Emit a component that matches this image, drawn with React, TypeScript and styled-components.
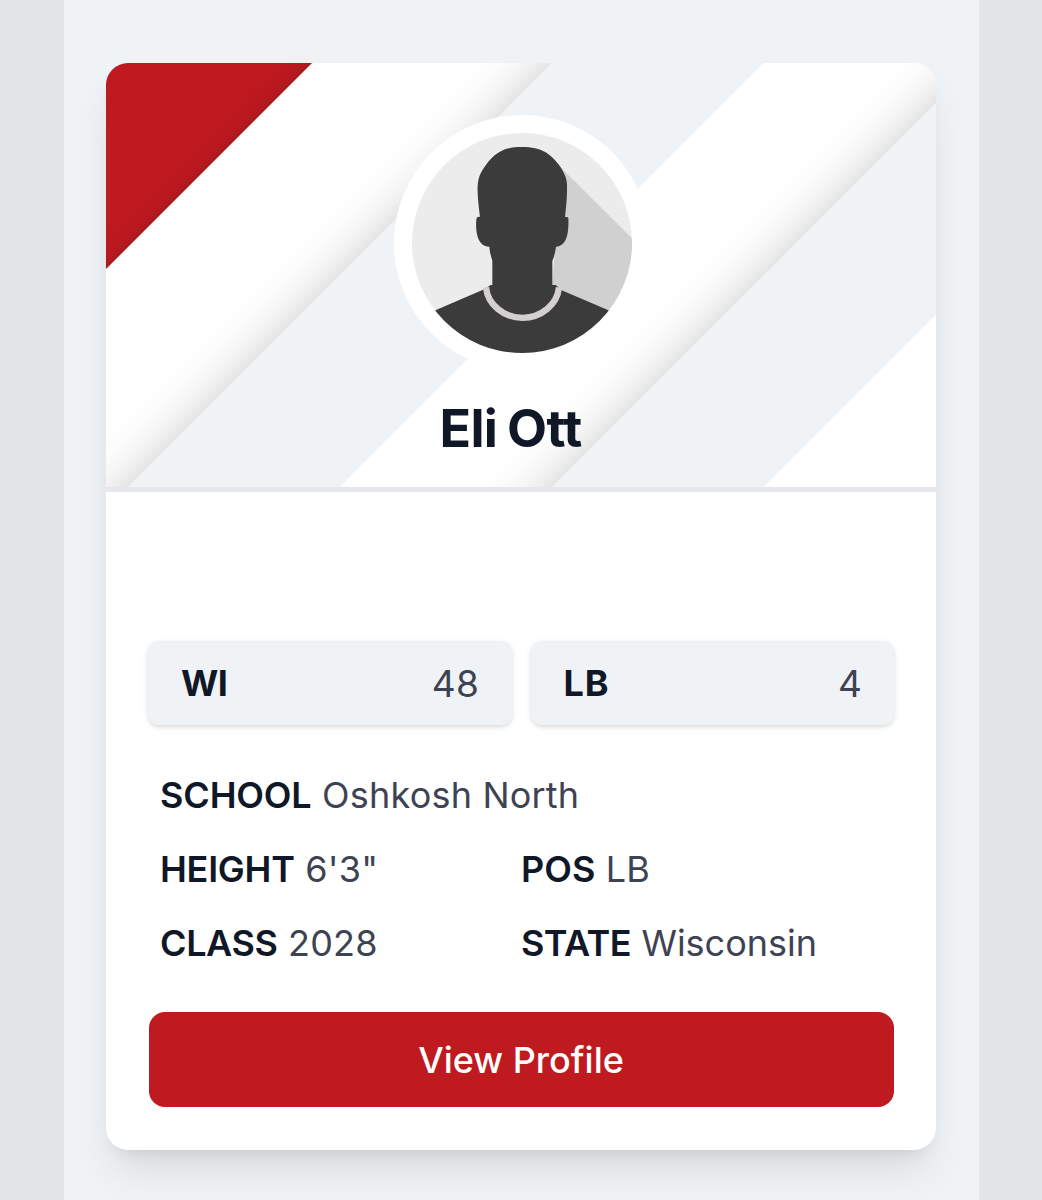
import React from "react";
import styled, { createGlobalStyle } from "styled-components";

const GlobalStyle = createGlobalStyle`
  *, *::before, *::after { box-sizing: border-box; }
  body {
    margin: 0;
    background: #e2e6e9;
    font-family: Inter, "Liberation Sans", sans-serif;
    color: #101828;
  }
`;

const Page = styled.main`
  width: 914.5px;
  height: 1200px;
  margin-left: 64px;
  padding: 63px 42px 0;
  background: #eff3f6;
  overflow: hidden;
`;

const Card = styled.article`
  width: 830px;
  height: 1086.5px;
  border-radius: 22px;
  background: #fff;
  overflow: hidden;
  box-shadow: 0 26px 40px -8px rgba(0, 0, 0, 0.1), 0 11px 16px -10px rgba(0, 0, 0, 0.1);
`;

const Hero = styled.header`
  height: 429px;
  padding-top: 52px;
  display: flex;
  flex-direction: column;
  align-items: center;
  border-bottom: 5px solid #e6e7ea;
  background: linear-gradient(
      135deg,
      #bf1a20 0 112px,
      #bc191f 130px,
      #b5191f 142px,
      #a51b21 145.2px,
      #fff 146.2px 262px,
      #fcfcfc 278px,
      #f6f6f6 294px,
      #eeeeee 305px,
      #e5e5e6 314.8px,
      #f1f2f6 315.8px,
      #eff3f6 330px 464.8px,
      #fff 465.8px 562px,
      #fcfcfc 578px,
      #f6f6f6 594px,
      #eeeeee 605px,
      #e5e5e6 614.8px,
      #f1f2f6 615.8px,
      #eff3f6 630px 764.3px,
      #fff 765.3px
    )
    padding-box;
`;

const AvatarRing = styled.div`
  width: 256px;
  height: 256px;
  margin-left: 2px;
  padding: 18px;
  border-radius: 50%;
  background: #fff;

  svg {
    display: block;
    width: 220px;
    height: 220px;
  }
`;

const PlayerName = styled.h1`
  margin: 26px 21px 0 0;
  font-size: 52px;
  line-height: 64px;
  font-weight: 700;
  letter-spacing: -0.6px;
  word-spacing: -2px;
`;

const Body = styled.section`
  padding: 149px 42px 0;
`;

const Ranks = styled.div`
  display: grid;
  grid-template-columns: 1fr 1fr;
  gap: 19px;
`;

const Rank = styled.div`
  height: 84px;
  padding: 0 32px 0 33px;
  display: flex;
  align-items: center;
  justify-content: space-between;
  border-radius: 11px;
  background: #f0f3f6;
  box-shadow: 0 2px 6px rgba(0, 0, 0, 0.1), 0 2px 4px -1px rgba(0, 0, 0, 0.08);
  font-size: 36px;
`;

const Label = styled.span<{ $spacing?: number; $weight?: number }>`
  font-weight: ${(p) => p.$weight ?? 600};
  letter-spacing: ${(p) => p.$spacing ?? 0}px;
  color: #101828;
`;

const Value = styled.span<{ $spacing?: number }>`
  font-weight: 400;
  letter-spacing: ${(p) => p.$spacing ?? 0}px;
  color: #3d4352;
`;

const RankValue = styled(Value)`
  font-size: 37px;
`;

const Facts = styled.dl`
  margin: 33px 0 0;
  padding-left: 12px;
  display: grid;
  grid-template-columns: 361px 1fr;
  grid-auto-rows: 74px;
  font-size: 36px;
`;

const Fact = styled.div<{ $wide?: boolean }>`
  grid-column: ${(p) => (p.$wide ? "1 / -1" : "auto")};
  display: flex;
  align-items: center;
  gap: 10.5px;
  white-space: nowrap;
`;

const ProfileButton = styled.button`
  display: block;
  width: 745px;
  height: 95px;
  margin: 32px auto 0;
  border: 0;
  border-radius: 16px;
  background: #bf1a20;
  color: #fff;
  font: 500 36px Inter, "Liberation Sans", sans-serif;
  letter-spacing: 0;
`;

function Silhouette() {
  return (
    <svg viewBox="0 0 660 660" role="img" aria-label="Player silhouette">
      <defs>
        <clipPath id="avatar-clip">
          <circle cx="330" cy="330" r="330" />
        </clipPath>
      </defs>
      <g clipPath="url(#avatar-clip)">
        <rect width="660" height="660" fill="#ececec" />
        <path d="M448 105L670 326V560L590 532L420 460Z" fill="#d0d0d0" />
        <path
          d="M60 536L220 467L236 456H241V383C236 366 233 355 232 341C212 341 199 326 195 303C191 284 192 262 194 254C197 252 200 251 204 252C201 228 198 205 197 180C196 150 199 130 212 110C244 62 270 42 330 42C390 42 417 62 447 104C459 124 465 138 465 159C466 193 462 224 459 252C463 251 468 252 469 255C470 275 469 289 466 305C461 327 449 340 432 341C430 357 427 369 421 384V456H431L449 472L595 534L670 570V670H-10V570Z"
          fill="#3b3b3b"
        />
        <path d="M222 463A110 101 0 0 0 441 463" fill="none" stroke="#d4d0cf" strokeWidth="19" />
      </g>
    </svg>
  );
}

export default function App() {
  return (
    <>
      <GlobalStyle />
      <Page>
        <Card>
          <Hero>
            <AvatarRing>
              <Silhouette />
            </AvatarRing>
            <PlayerName>Eli Ott</PlayerName>
          </Hero>
          <Body>
            <Ranks>
              <Rank>
                <Label $weight={700} $spacing={-0.6}>WI</Label>
                <RankValue $spacing={0.5}>48</RankValue>
              </Rank>
              <Rank>
                <Label $weight={700} $spacing={0.8}>LB</Label>
                <RankValue>4</RankValue>
              </Rank>
            </Ranks>
            <Facts>
              <Fact $wide>
                <Label $spacing={-0.15}>SCHOOL</Label>
                <Value $spacing={0.2}>Oshkosh North</Value>
              </Fact>
              <Fact>
                <Label $spacing={-0.25}>HEIGHT</Label>
                <Value $spacing={0.2}>6'3"</Value>
              </Fact>
              <Fact>
                <Label>POS</Label>
                <Value>LB</Value>
              </Fact>
              <Fact>
                <Label $spacing={-0.4}>CLASS</Label>
                <Value $spacing={0.2}>2028</Value>
              </Fact>
              <Fact>
                <Label $spacing={-0.55}>STATE</Label>
                <Value>Wisconsin</Value>
              </Fact>
            </Facts>
            <ProfileButton>View Profile</ProfileButton>
          </Body>
        </Card>
      </Page>
    </>
  );
}
